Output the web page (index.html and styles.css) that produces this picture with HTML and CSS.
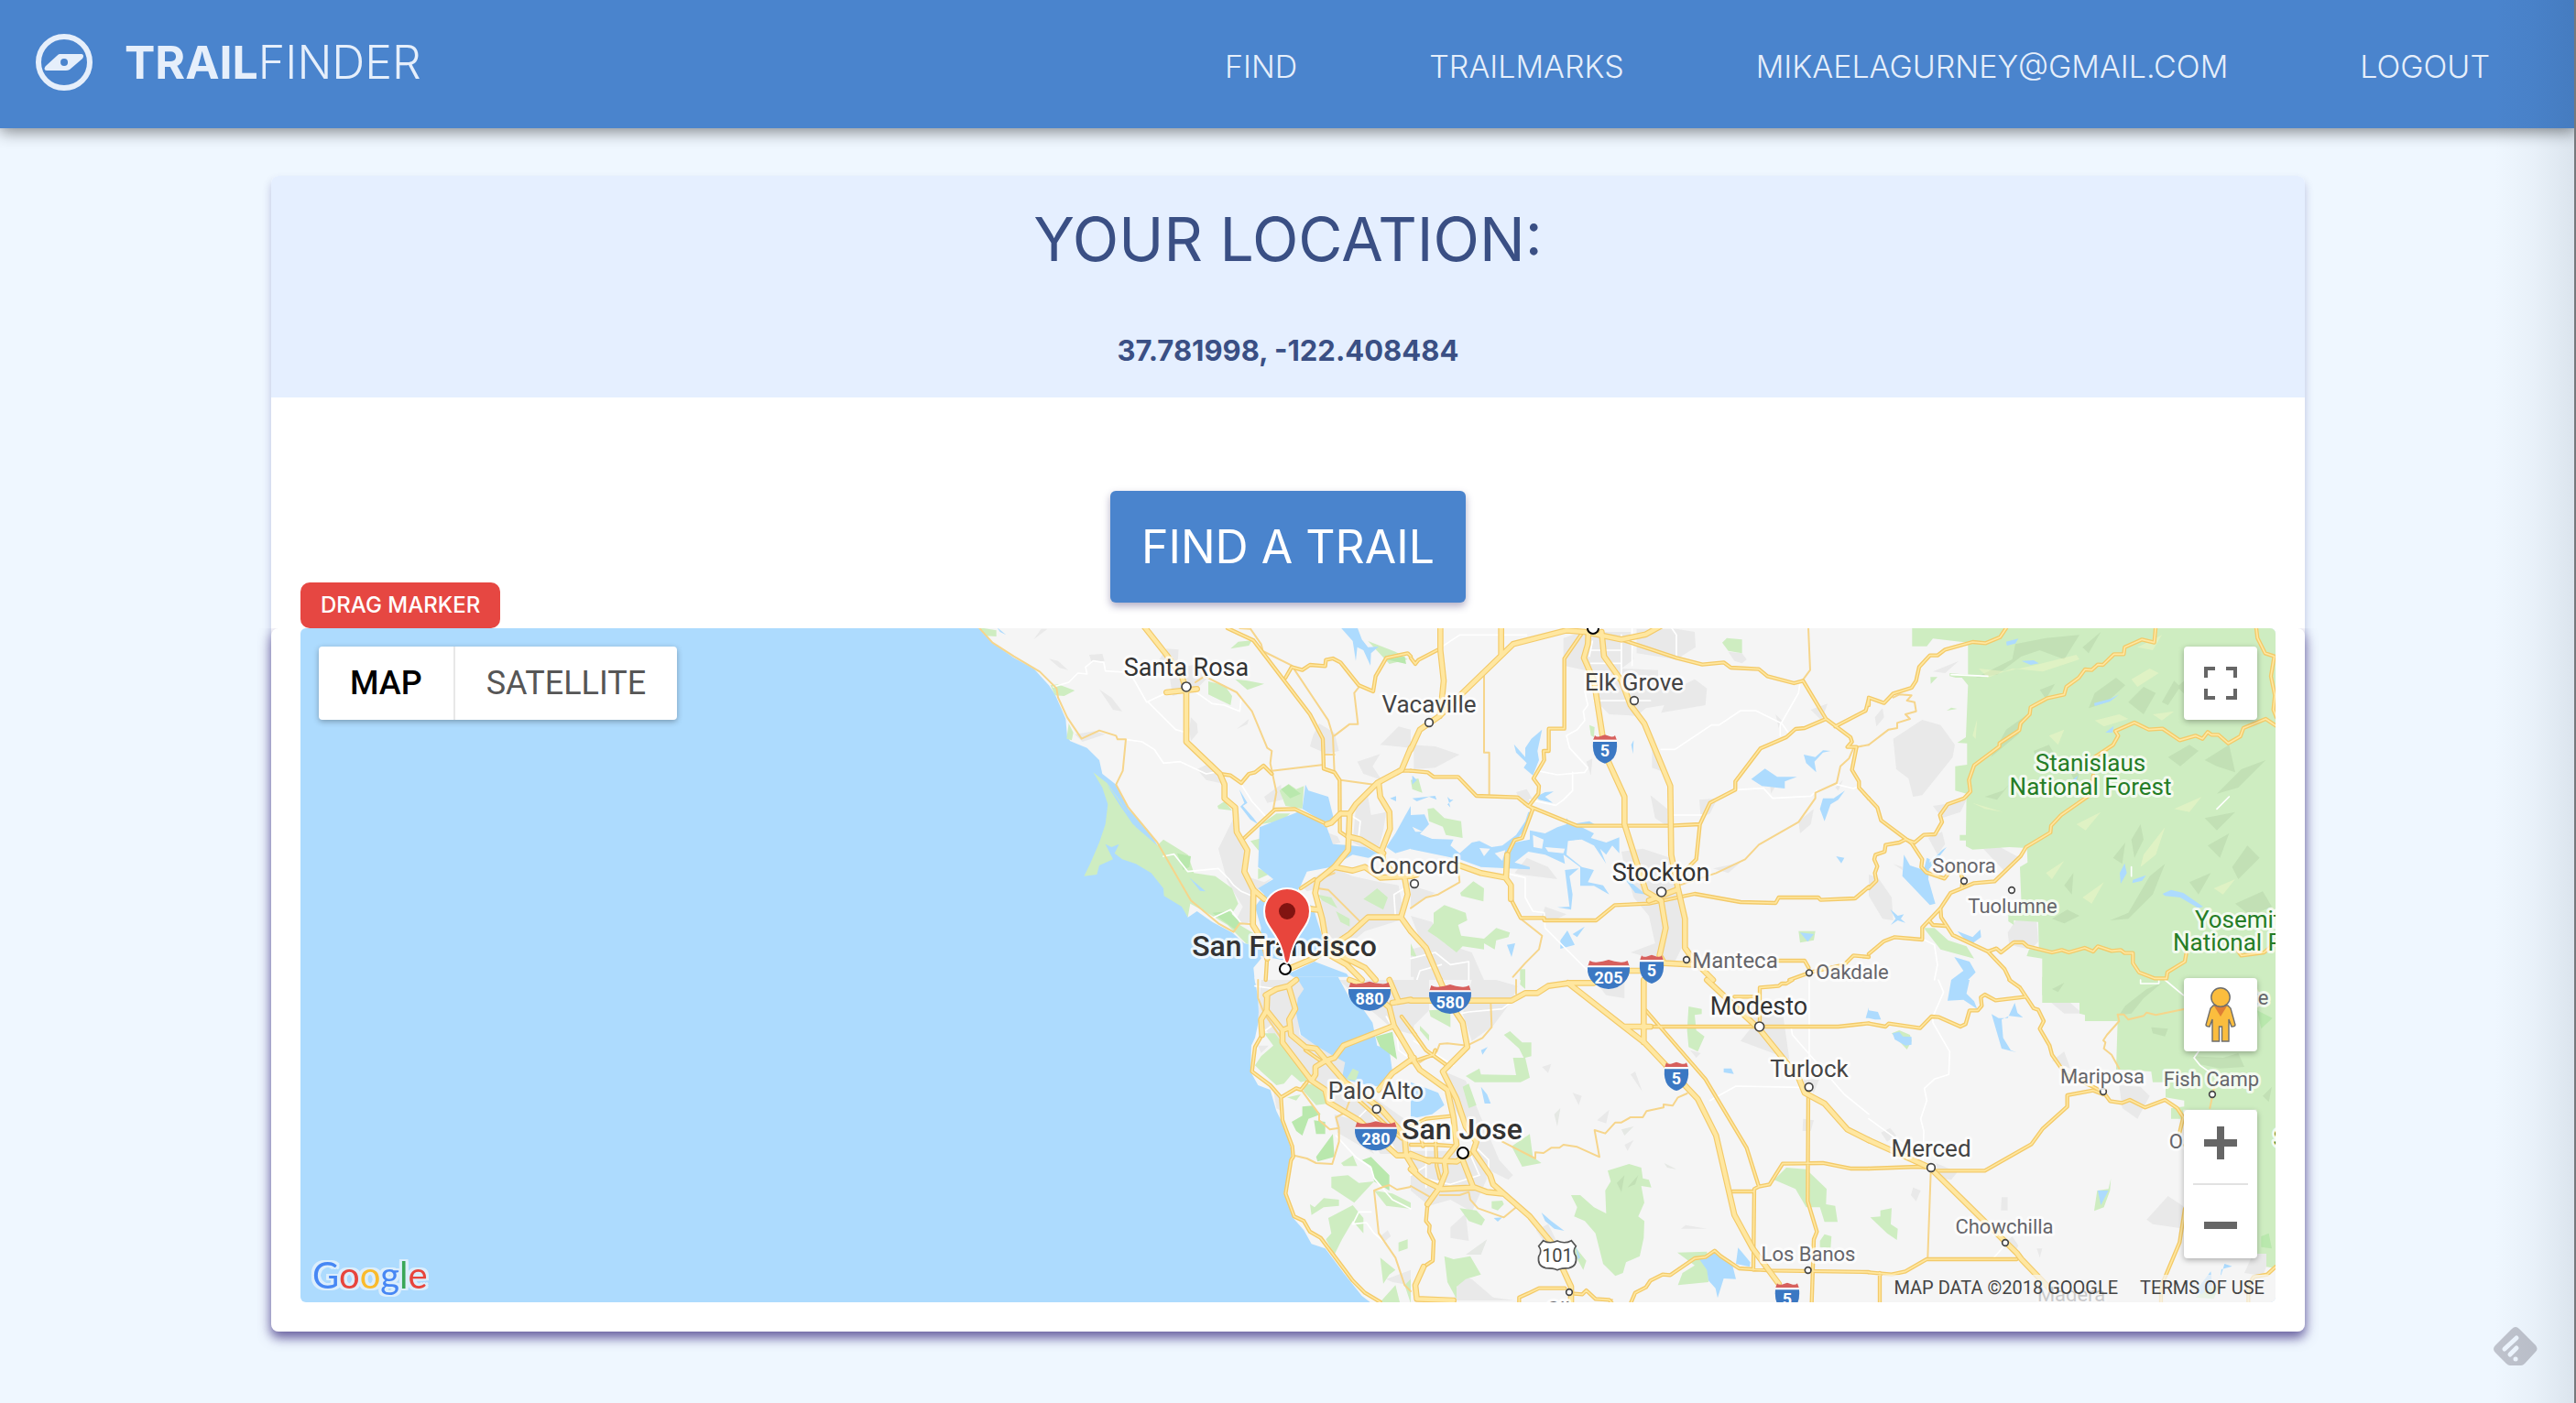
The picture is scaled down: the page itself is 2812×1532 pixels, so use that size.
FILE: index.html
```html
<!DOCTYPE html>
<html lang="en">
<head>
<meta charset="utf-8">
<meta name="viewport" content="width=device-width, initial-scale=1">
<title>TrailFinder</title>
<link rel="stylesheet" href="styles.css">
</head>
<body>
<header class="topbar">
  <a class="brand" href="#">
    <svg class="brand-icon" viewBox="0 0 64 64" aria-hidden="true">
      <circle cx="32" cy="32" r="28" fill="none" stroke="currentColor" stroke-width="6"/>
      <path fill="currentColor" fill-rule="evenodd" d="M27 23H50C53 23 54 25 52 28L38 40Q36 41 34 41H13C10 41 10 38 12 36L24 25Q26 23 27 23ZM32 28a4 4 0 1 0 .1 8a4 4 0 1 0-.1-8Z"/>
    </svg>
    <span class="brand-name"><b>TRAIL</b>FINDER</span>
  </a>
  <nav class="nav">
    <a href="#">FIND</a>
    <a href="#">TRAILMARKS</a>
    <a href="#">MIKAELAGURNEY@GMAIL.COM</a>
    <a href="#">LOGOUT</a>
  </nav>
</header>

<main class="card">
  <section class="location">
    <h1>YOUR LOCATION:</h1>
    <p>37.781998, -122.408484</p>
  </section>
  <section class="actions">
    <span class="drag-tag">DRAG MARKER</span>
    <button class="find" type="button">FIND A TRAIL</button>
  </section>
  <section class="map-card">
    <div class="map">
      <svg class="map-art" viewBox="0 0 2156 736" role="img" aria-label="Map of the San Francisco Bay Area">
        <defs>
          <g id="major">
            <g transform="translate(2136 -48)">
              <path d="M625 40L700 135L750 205L765 250V420L875 525L890 560V605L925 635L930 715L965 775L955 845L985 905L1020 935M985 905L983 1020L1020 1080L1030 1130M700 258L800 247"/>
              <path d="M1500 440L1470 512L1390 555L1320 625L1300 655H1270L1240 685L1225 690M1300 655L1295 775L1250 830L1195 875L1187 915L1210 1000L1220 1060L1240 1110"/>
              <path d="M1395 555L1400 600L1430 650L1432 705L1405 775L1410 810L1450 860M1295 730L1335 740L1410 785M1250 830L1310 842L1350 830L1400 865L1500 860M1480 865L1490 920L1468 995H1360L1300 1050L1180 1130L1110 1160M1468 995L1500 1040M1150 965L1195 970M1220 1110L1290 1150L1340 1200M1250 1110L1350 1160L1385 1200"/>
            </g>
            <g transform="translate(3636 -48)">
              <path d="M97 40V120L108 220L100 300L95 335M296 40V135M820 40L770 68L690 85L570 60L510 55L335 100L170 260L95 335L30 380L0 445"/>
              <path d="M582 60L580 100L567 145L600 220L628 400L645 480L700 600V690L770 910L820 940M625 60L633 140L690 220L720 300L765 360L850 565L853 790L875 900L898 1000V1095L930 1140L990 1200"/>
              <path d="M160 825L230 850L310 865L328 890V935M316 790L312 865M780 940L870 905M820 940L835 1030L815 1120L830 1145L925 1150M715 1170H760M0 860L20 855M0 1040L50 1095L95 1200"/>
            </g>
            <g transform="translate(2136 1152)">
              <path d="M1025 50L1060 30L1100 20L1125 0M1100 20L1122 95L1102 130L1108 180L1155 220L1190 225L1285 335L1400 420L1480 510M1030 50L1028 100L1010 130L1013 180M1028 100L1080 165L1105 155M1080 165V205L1175 330L1220 360L1230 400L1330 460L1455 575H1500M1175 330L1188 310V285L1220 265L1250 255L1280 215L1445 150M1395 360L1440 305L1510 255M1300 0L1350 20L1430 90L1445 150L1510 260M1440 75L1500 65M1430 0L1460 70M1480 510L1485 575L1515 625"/>
            </g>
            <g transform="translate(3636 1152)">
              <path d="M0 68H330L375 43H415L450 20L520 10H600M515 10L700 155L765 205L940 390L1000 510L1060 770L1120 880L1205 995M763 0V205M700 153H785M970 0L1145 165L1270 320L1290 370L1355 405L1430 490L1500 525"/>
              <path d="M95 0L130 80L170 140L185 220L105 300L150 390L180 480L215 530L205 560L260 640L270 670L390 775L460 860M0 250L30 295L120 360L140 450L150 540L110 590L115 630L95 680L55 735M0 575L50 590L150 595L190 570M0 620L40 655L100 685L210 680L250 695L300 700M170 590L205 680M0 570L60 595M495 940L525 1005V1070M42 940L15 1000L20 1045L140 1050"/>
            </g>
            <g transform="translate(5136 1152)"><path d="M0 525L200 615L485 895L500 915L610 1030"/></g>
          </g>
          <g id="medium">
            <g transform="translate(2136 -48)">
              <path d="M900 48L985 88L1170 330L1212 410L1215 508L1250 520L1267 545L1268 715L1290 730M1090 210L1110 175L1145 185L1170 168L1220 172L1222 152L1245 147L1270 160L1330 235L1377 255L1385 205L1420 145L1490 130L1500 140M955 735L1055 642L1120 640L1225 690M875 525L910 530L945 555L970 525L990 520L1018 498L1045 525M1140 900L1185 870M1030 1120L1025 1200M1465 515H1500M1250 1100L1280 1060"/>
            </g>
            <g transform="translate(3636 -48)">
              <path d="M0 145L15 165L25 152L90 118M0 515L55 520L75 535H155L215 597L350 602L385 630L545 695H850L947 690L980 620L1063 577V550L1145 442L1230 405L1260 378L1290 375L1360 345M560 65L503 148V377H452V450H435L437 480L402 540L420 565L418 590L387 630L400 640L365 735L340 742L316 790M328 935L360 997H437V1005H607L668 955L780 950L930 918L1080 945L1195 948L1205 930H1335L1342 938L1455 933L1500 895M947 690L935 805L880 860M690 85L870 145L955 167L1025 160L1048 177L1140 182L1168 205L1255 228L1285 220L1360 345L1440 405L1445 420L1430 437H1460L1445 512L1468 550V570L1500 605M1390 370L1490 318L1500 280M1200 1137H1290L1303 1160M1240 1200L1310 1175L1420 1150L1450 1120L1500 1125"/>
            </g>
            <g transform="translate(5136 -48)">
              <path d="M0 300V275L50 293L80 262L140 243L155 220L165 175L200 137H225L250 118L340 93L383 97L430 77L455 40M940 40L935 95L895 85L838 110L835 133H803L767 168L750 167L730 185L708 183L688 210L647 240L640 265L585 277L530 307L527 330L497 360L493 382L428 425V435L345 497L328 545L333 583L312 605L258 625L233 660L240 683L217 723L180 725L150 750L120 740L100 750L55 758L52 780L22 790L18 805L28 828L20 850L25 875L0 900"/>
              <path d="M0 605L28 635L40 677L140 752L175 805L172 830L188 848L248 868L265 845M290 825L308 870L305 895M735 530L730 590L630 660L597 695L595 717L515 765L497 795L412 877L345 883L305 900L268 915L235 965L175 1028V1068L85 1060L50 1073L0 1115M235 965L237 995L275 1053L390 1107L445 1165L462 1200M200 1008L210 1020L250 1023M390 1107L418 1097L433 1110L475 1077H505L520 1090L600 1110L632 1102L655 1110L707 1095L735 1107L750 1090L795 1105L825 1102L838 1112H865V1145L885 1175L935 1195H975L978 1175L1035 1140L1045 1085L1100 1080M740 470L800 430L817 400L807 385L870 357L917 380L962 377L1018 415L1070 400L1093 410L1110 388L1122 397H1145L1177 425L1217 402L1227 375L1300 345L1340 372M1268 40L1273 80L1298 130L1328 140L1317 205L1330 268L1325 315L1335 340M1190 1080L1220 1120L1295 1110L1340 1070"/>
            </g>
            <g transform="translate(2136 1152)">
              <path d="M1013 180L990 220L980 300L1040 345L1075 385L1125 355L1140 360L1160 335M1075 385L1080 460L1112 545L1115 580L1108 590L1090 700L1118 775L1150 790L1170 825L1205 845L1310 985L1350 1025L1400 1055M1155 230L1205 265M1330 395L1470 520M1470 120L1515 180"/>
            </g>
            <g transform="translate(3636 1152)">
              <path d="M1143 165V25L1205 20L1215 12H1230L1250 0M1060 55H1143M785 153H1400L1500 142M770 100L965 325L1100 550L1140 677L1125 685L1122 950M1053 693H1122M1140 677L1175 670L1218 602L1350 600L1440 618H1500M1302 370L1300 725L1330 825L1320 850L1313 1060M1500 957L1180 952L1075 945L1015 905L995 887L965 908L930 912L850 967L825 965L785 985L770 1007L735 1025L720 1060M55 735L50 790L62 805L60 825L75 855L72 920L42 940M355 1060V1040L385 1027L420 1010H505M535 1028L562 1030L575 1017L605 1045L650 1048L660 1060M0 160L50 230L125 285M0 270L75 245L80 230M0 540H80L150 545M0 480L50 455L140 445M80 500L85 610L95 650M30 500L40 545"/>
            </g>
            <g transform="translate(5136 1152)">
              <path d="M0 143L55 153L65 143L168 158L205 120L230 122L300 153L317 145L330 100H357L370 85L367 57L380 48L415 67L515 55L495 25L460 0M515 55L540 93L555 98L573 135L560 160L592 215L600 245L645 310L735 350L770 370L790 397L830 403L855 393L905 418L970 393L1010 420L1030 450L1018 500M768 375L735 362L650 378V415L570 487L533 538L380 625H210M200 615L160 612L0 618M485 915H190L120 955L75 965L0 958M36 960V1060M1035 750L1018 860L957 1005V1060M1332 940L1305 965L1260 973L1243 1000V1060"/>
            </g>
          </g>
        </defs>

        <g transform="scale(.33333)">
          <rect class="land" x="3630" width="2850" height="2210"/>
          <g transform="translate(2136 -48)">
            <path class="land" d="M88 40L130 95L200 145L265 180L315 235L335 265L355 310L370 345L375 405L385 418L440 440L480 480L490 525L535 560L575 640L640 710L690 790L770 995L800 975L850 1010L915 1045L955 1080L1000 1090L1010 1130L985 1160L990 1210H1510V40Z"/>
            <path class="urban" d="M315 148L345 155L378 185L350 178ZM447 135L490 132L497 155L455 160ZM480 248L520 275L555 320L525 315ZM265 85L290 50H310ZM400 395L465 385L500 395L425 420ZM700 115L740 118L735 180L800 165L840 150L835 210L800 245L720 270L710 205L650 190ZM780 340L800 360L803 390L780 418L775 380ZM930 378L970 345L965 362ZM800 510L850 485L885 530L900 560L830 545ZM870 770L920 670L940 720L965 780L960 860L1020 880L1050 865L1000 905L975 960L975 1010L915 1030L950 960L900 880ZM1180 400L1200 360L1250 390L1265 450L1225 460L1170 435ZM1325 485L1400 460L1375 500L1405 545L1345 525ZM1020 600L1075 560L1080 610L1030 620ZM1320 635L1360 600L1370 660L1420 650L1410 710L1390 790L1310 750ZM1400 430L1460 370L1500 380V440ZM1180 700L1260 730L1270 750L1240 758ZM1140 890L1240 830L1310 860L1400 880L1460 890L1480 1000L1350 1040L1280 1100L1220 1040L1200 900L1160 910Z"/>
            <path class="park" d="M460 520L490 570L508 625L500 690L480 750L450 820L430 860L472 855L480 825L525 805L500 755L520 765L545 755L530 785L555 805L600 820L650 850L690 900L692 925L750 960L770 995L778 950L850 990L900 1020L960 1080L985 1090L990 1050L940 1020L910 990L935 950L915 900L860 860L790 850L770 790L690 740L670 760L600 700L545 610L505 555ZM85 45L143 55V75L110 73ZM320 235L345 232L400 252L365 270L335 268ZM380 360L395 390L390 415L373 410ZM910 115L935 92L980 88L970 105ZM837 222L890 235L915 270L910 300L837 265ZM925 215L965 220L1020 230L965 250ZM1070 580L1100 558L1125 575L1150 565L1145 640L1090 630ZM867 630L890 615L915 645L870 640ZM1010 690L1060 655L1105 655L1080 678ZM975 745L1015 735L1005 780ZM1000 835L1040 852L1000 870ZM1360 90L1450 125L1490 150L1430 165ZM1345 935L1390 900L1425 930L1410 970ZM1195 920L1240 930L1260 965L1210 940ZM1255 975L1300 1000V1025L1270 1010Z"/>
            <path class="park-deep" d="M735 785L780 795L775 830L755 840ZM850 980L905 975L940 1010L925 1035ZM1420 150L1480 140L1485 165ZM1075 575L1100 560L1140 590L1105 605Z"/>
            <path class="water" d="M145 45L175 70L155 60ZM1270 45H1325L1340 85L1360 110L1395 108L1370 130L1368 170L1345 120L1325 110L1320 155L1310 90ZM938 575L965 620L950 630L985 670L1000 690L975 675L942 632L955 620ZM505 560L525 585L570 650L640 715L655 740L590 690L545 625ZM775 865L828 910L810 908ZM1155 560L1165 580L1230 600L1245 660L1250 680L1210 680L1145 640Z"/>
            <path class="water" d="M1005 700L1080 670L1130 650L1170 665L1225 700L1245 755L1290 758L1350 765L1400 790L1360 800L1310 790L1240 830L1160 845L1140 890L1120 920L1180 960L1195 1010L1215 1070L1190 1110L1160 1090L1140 1120L1080 1135L1000 1120L1010 1030L990 960L1020 920L1000 900L1050 870L1000 830ZM1500 630L1480 665L1450 720L1420 765L1450 785L1500 770ZM1432 605L1452 598V615ZM1185 1140L1290 1180L1310 1210H1140L1100 1180Z"/>
            <path class="white-road" d="M330 240L380 225L410 195L440 198L435 175L460 155L495 160L500 188L560 192L590 210L635 290L700 260M640 290L730 380L765 390M800 260L850 295L890 300L940 320L945 275M565 412L620 420L660 445L690 490L745 485L830 525L870 518M945 560L980 615L1025 665M690 795L725 788L770 845L870 835L905 870L920 890L945 910L980 925M855 995L910 970L945 1015M1310 665L1335 680L1330 725M1450 995L1445 920L1480 900"/>
            <path class="small-road" d="M85 45L130 95L200 140L285 190L340 245L345 275L375 340L422 410L480 383L535 400L540 412L567 412L557 515L535 560L575 635L670 750L780 940L870 1015L920 1043L940 1015L980 1018M795 225L825 205L930 258L980 320L1030 440L1045 450L1040 490L1060 585L1050 640M1010 120L1110 170L1230 350L1245 400L1250 520M1250 400L1300 362H1327L1315 260L1335 235M1045 515L1215 495M1215 462H1250M1270 545L1390 562M940 48L975 50L1010 100L1015 120M1195 900L1230 905L1335 1010M1200 870L1250 850"/>
          </g>
          <g transform="translate(3636 -48)">
            <path class="urban" d="M500 80L560 60H720L730 150L690 180L810 185V210L890 235L930 215L970 245L965 300L820 325L830 300L770 310L740 335L650 330L620 300L610 250L590 190L500 170ZM740 50H870L930 60L933 110L870 150L740 130ZM1040 125L1085 130L1100 150L1085 163L1060 155ZM0 430L80 435L160 462L80 505L10 510V445ZM345 585L380 575L400 610L370 630ZM575 485L595 475L590 530ZM790 440L820 470L830 520L790 505ZM785 595L840 640L845 700L800 670ZM945 610L1005 605L980 655L950 670ZM690 780L760 770L850 800L870 870L890 920L905 1060L860 1150L720 1110L800 1080L780 990L730 930L700 830ZM1195 330L1215 350L1205 375ZM1310 315L1365 295L1345 350ZM1270 680L1320 640L1310 690L1275 720ZM380 800L450 830L480 870L360 855L340 850ZM0 990L70 1010L110 1080L200 1110L240 1200H0V1100L40 1090ZM0 890L80 915L0 960ZM440 960L510 985L460 1010L430 990ZM990 835L1080 815L1040 850ZM1175 550L1205 545L1180 590ZM1390 570L1415 545L1400 580Z"/>
            <path class="park" d="M0 545L25 540L38 587L5 575ZM55 640L75 637L110 670L165 680L170 735L115 725L105 698L60 680ZM162 915L205 877L240 900L238 943L165 925ZM75 980L110 955L180 980L185 1005L155 1020L165 1055L240 1065V1100L170 1090L150 1110L85 1060L55 1040L75 1015ZM240 1065L280 1030L325 1045L320 1060L280 1070L275 1100L240 1080ZM1020 95L1035 80L1085 85V130L1040 122ZM585 365L602 372L600 405L590 400ZM358 1165H375V1200H358ZM1270 1040L1325 1040L1320 1070L1275 1078ZM0 1080L20 1125L0 1120Z"/>
            <path class="water" d="M338 428L375 470L375 440L395 410L425 385L430 380L415 450L420 480L400 530L370 505L380 490L345 455ZM0 660L45 658L60 690L30 722L70 738L140 740L130 760L160 785L200 750L225 745L265 765L300 760L345 725L375 680L385 650L395 650L380 700L340 750L390 740V710L440 720L480 700L510 690V670L525 690L585 680L602 690L560 700L600 720L590 735L640 750L683 733V785L660 760L640 790L620 770L640 820L600 760L560 740L515 745L510 790L560 830L600 840L580 880L630 890L650 920L600 892H555V830L500 790L505 820L440 790L385 780L340 815L390 830V838L320 835L230 830L160 805L0 772ZM505 840L550 835L520 860L530 920L525 970L480 962L520 960ZM690 855L770 920L735 915ZM5 530L20 545L5 560ZM5 605L80 597L85 610L60 600L20 615ZM120 600L130 610H140L120 625L130 635ZM410 600L440 585L468 583L440 600L465 620L420 610ZM490 1070L513 1038L537 1085L490 1098ZM530 1050L570 1025L545 1060ZM315 1085L342 1080L330 1125ZM722 430L730 415L728 460ZM1115 542L1160 508L1200 535H1265L1225 550L1225 573L1150 565ZM1287 462L1325 470L1350 448L1375 450L1350 455L1322 485L1328 520L1295 490ZM1340 640L1350 605L1385 605L1422 580L1400 610L1375 625L1355 680ZM1393 795L1420 800L1410 818ZM1275 1045L1320 1050L1300 1075Z"/>
            <path class="land" d="M400 725L435 740L430 770L402 765ZM440 765L505 770L500 785L450 780ZM530 745L555 740L585 780L560 790L530 770ZM5 698L40 715L15 715ZM225 768L260 770L240 795ZM275 785L310 775L300 810Z"/>
            <path class="white-road" d="M100 110L160 70H380M725 48V170M690 70V200M590 120H690M590 163H690M595 90L585 140M600 285H785M570 255L580 300L565 320L570 350L545 380L510 400L520 440L580 505L570 520L480 528L415 515M530 520V580L500 610L475 628L390 610M820 445H865L985 365H1010L1080 318H1130L1215 360L1240 395M1275 225L1270 260L1210 365V400M860 660H955M1065 577L1155 572L1185 605L1310 598L1330 580M1395 560L1450 573L1470 565M310 850L375 865V930L400 975L437 980L440 1030L580 1170M855 48L870 70V140M0 1130L80 1110L130 1150L190 1140V1200M20 1200L30 1170L100 1150"/>
            <path class="small-road" d="M240 205V455H257V595M1302 45L1308 185L1282 220M880 890L1000 850L1095 805L1140 757L1270 683L1325 605V587L1395 555L1407 500L1435 475L1450 440M1460 437L1500 430M155 830L160 880L90 920L50 930L0 965M360 1000L430 1055L420 1100L375 1145L335 1190"/>
          </g>
          <g transform="translate(5136 -48)">
            <path class="urban" d="M80 410L175 348L235 365L282 430L275 470L175 595L145 600L130 540L90 510ZM0 855L30 865L75 930L80 1005L45 1000L0 925ZM210 630L275 620L320 610L300 650L240 670ZM195 735L240 715L250 755L225 790ZM375 770L430 765L495 800L450 850ZM455 1045L485 1000L550 1010L555 1075L530 1100L460 1085ZM20 340L45 310L50 340L25 370ZM80 820L110 830V840ZM210 190L295 155L250 195Z"/>
            <path class="park" d="M142 40H1340V1250H568V1130L517 1122L525 1100L557 1095L555 1010L475 1005V1020L457 1008V980L500 955L495 830L520 815L518 768L460 765L340 773L318 762V743H298V725H318L320 590L283 580V500L322 495V425L290 423L318 405L325 235L305 210H285L265 205V195L325 200V95L210 82L190 107H142ZM202 208H225L203 230ZM255 318L270 308L290 312ZM180 1030H215L260 1070L320 1090L345 1130L235 1100Z"/>
            <path class="relief-dark" d="M480 100L580 80L690 70L640 150L560 120L500 140L420 200L350 210L470 150ZM700 110L760 60L720 130ZM740 260L810 210L840 235L780 290L720 310ZM850 290L900 240L940 260L900 330ZM450 380L520 330L490 395L400 470ZM540 450L590 430L620 480L560 500ZM380 600L440 580L460 560L420 610ZM660 520L700 480L680 560ZM1010 240L1090 170L1050 280ZM960 290L1000 220L1020 240L980 300ZM1100 480L1180 430L1200 520L1140 500ZM1140 590L1220 510L1300 480L1210 570ZM980 470L1050 430L1080 450L1020 500ZM860 740L890 690L900 740L870 800ZM800 800L840 750L830 820ZM920 860L970 820L930 920L850 1000L790 1005L850 980ZM1110 760L1180 720L1150 800ZM1190 830L1240 760L1280 800L1210 870ZM600 1000L650 970L690 990L640 1015ZM1050 880L1120 850L1080 920ZM1200 950L1290 910L1320 960L1250 990ZM1100 670L1200 650L1140 710ZM560 250L610 230L580 280ZM640 890L670 850L665 920Z"/>
            <path class="relief-light" d="M360 180L450 190L560 165L680 135L690 150L570 190L470 180L390 210ZM860 215L920 180L950 195L880 240ZM740 350L820 330L850 345L770 370ZM930 330L1000 320L960 350ZM590 400L640 380L620 430ZM340 620L440 650L380 640ZM1000 640L1090 600L1050 650ZM900 790L970 700L940 790L890 830ZM1130 900L1200 870L1160 920ZM580 850L640 810L600 870ZM680 690L760 650L710 710ZM880 110L960 70L930 120ZM700 930L770 880L730 950ZM340 400L355 345L350 410Z"/>
            <path class="water" d="M450 92L490 82L480 98L452 105ZM500 155L540 153L557 163L530 168ZM738 293L790 280L820 265L790 288L740 303ZM775 390L802 368L798 390ZM822 850L838 818L845 850L825 885ZM865 872L908 857L895 875L863 883ZM962 918L990 905L1030 915L1095 960L1080 965L1020 930L970 925ZM115 790L135 825L180 840L190 800L200 805L195 870L218 950L200 955L110 860ZM240 775L255 765L200 835L185 830ZM70 968L95 990L115 985L105 1000L120 1013L95 1005L72 1020L88 1000ZM290 1040L340 1060L365 1035L368 1060L340 1080L320 1075ZM280 1125L330 1140L350 1175L325 1200H270L310 1170ZM655 555L685 530L675 555Z"/>
            <path class="white-road" d="M175 1065L215 1085L225 1150L215 1200M1180 600L1140 640M270 200L390 205M860 830V860"/>
            <path class="small-road" d="M80 275L100 265L140 268L125 285L150 290L155 320L120 330L135 345L93 358V375L65 380L0 430"/>
          </g>
          <g transform="translate(2136 1152)">
            <path class="land" d="M988 -10L1000 60L1003 130L990 190L978 215L975 300L1000 345L1040 360L1060 430L1085 480L1110 560L1100 640L1085 700L1115 780L1150 820L1175 865L1220 880L1280 960L1340 1035L1385 1070H1510V-10Z"/>
            <path class="urban" d="M1010 0H1130L1155 30L1130 60L1135 180L1250 240L1290 270L1280 320L1400 400L1500 470V570H1400L1330 460L1240 410L1140 300L1030 170L1000 130ZM1250 440L1320 460L1380 570L1260 500ZM1265 0H1510V180L1440 160L1370 100ZM1000 215L1035 215L1010 240ZM1420 980L1500 950V1000L1440 990ZM1400 840L1425 820L1435 840L1410 860ZM1050 360L1075 380V430L1060 420Z"/>
            <path class="water" d="M1125 -10L1150 30L1130 60L1125 110L1140 180L1190 215L1240 245L1285 270L1275 320L1300 330L1360 345L1400 350L1440 300L1430 230L1390 215L1375 140L1340 90L1300 60L1262 -10Z"/>
            <path class="park" d="M1020 175L1055 175L1090 220L1150 300L1160 330L1140 335L1110 310L1085 340L1060 345L1010 300L990 280L1010 250L1050 215ZM1145 340L1200 345L1230 405L1190 410L1150 365ZM1095 385L1140 375L1125 395ZM1240 645L1295 640L1330 665L1380 660L1315 730L1240 680ZM1170 735L1185 745L1215 715L1265 720V740L1215 745L1175 770ZM1230 780L1310 738L1345 780L1345 830L1310 790L1275 850L1250 900L1222 850L1240 830ZM1272 600L1310 575L1325 610H1280ZM1380 690L1440 700L1500 730V750L1420 740ZM1460 860L1490 850V880L1460 890ZM1400 910L1450 950L1430 965L1410 995ZM1480 1000L1500 980V1060ZM1400 1055L1450 1000L1465 1060ZM1290 325L1310 290L1330 300L1320 330Z"/>
            <path class="park-deep" d="M1145 415L1180 412L1205 440L1165 455L1145 510L1125 495L1110 465L1145 445ZM1183 460L1220 465V505L1190 505ZM1245 505L1250 580L1195 595L1190 580L1215 545ZM1340 590L1370 580L1430 640V690L1380 660L1370 610ZM1385 185L1440 170L1455 260L1400 220Z"/>
            <path class="white-road" d="M990 20L1060 30M1045 150L1025 165M1255 510L1320 580L1370 615L1380 650L1440 720L1500 750M1310 800L1330 760L1370 760M1310 800L1355 795L1380 830L1415 860M1330 450L1360 420L1450 560M1420 120L1455 180L1460 230L1500 260"/>
            <path class="small-road" d="M1145 365L1200 440V460L1235 490L1265 485L1255 450L1285 435L1300 395M1265 490V530L1243 603L1190 600L1160 585L1118 575M1500 678L1455 687L1430 672L1410 678L1380 690L1385 735L1395 830L1450 910L1480 1000L1500 1020M1000 0V60L1020 110L1075 190"/>
          </g>
          <g transform="translate(3636 1152)">
            <path class="urban" d="M0 0H60V100L0 160ZM200 0H280L350 20L330 70L270 150L200 200L170 110ZM600 0L700 -20V60L640 50ZM110 300L180 330L230 450L290 590L335 640L320 655L250 620L200 520L130 400ZM0 560H230L250 650L200 760L130 720L60 740L0 690ZM130 810L180 765L190 855L130 845ZM410 820L450 800L480 860L430 850ZM1060 60L1220 120L1240 260L1160 230L1080 200L1120 150ZM1285 455L1320 460L1310 495H1283ZM1280 330L1340 320L1320 370ZM720 310L735 300L758 365ZM530 370L560 380L550 410ZM885 815L900 803L970 815ZM160 970L200 980L270 1040L340 1050H140ZM915 230L950 240L935 255ZM430 285L460 275L450 305ZM610 460L650 425L640 470ZM700 540L730 525L710 560Z"/>
            <path class="park" d="M305 180L325 168L365 205H395V250L375 255L390 320L360 335H210L180 315L225 290L230 310L345 312L335 255H370L355 225ZM170 350L190 340L215 410L190 420ZM645 625L715 603L755 615L760 650L780 655L788 680L755 675L765 730L745 775L765 790L763 845L750 905L705 925L695 960L670 970L630 930L605 830L570 790L535 775L545 745L525 705H555L600 745L640 765L637 690L655 660ZM330 545L390 505L400 580L428 600L365 612ZM160 748L215 755L243 785L232 805L190 790ZM265 725L300 723L305 735L285 755L265 748ZM110 905L140 915L195 905L230 965L180 980L150 1005V1045L120 990ZM910 87L953 95V112L930 115L935 165L962 185L940 235L910 220L905 165ZM1190 655L1230 615L1295 620L1362 685L1360 735L1390 740L1398 793H1355L1340 745L1295 745L1260 685ZM1340 855L1355 833L1378 840L1375 880L1340 875ZM873 893L970 890L975 990L875 1000L890 960L930 935ZM535 870L575 920L565 950L540 905ZM60 100L130 95V155L65 120ZM30 150L60 180V200L30 165ZM360 0H375V30L358 15Z"/>
            <path class="relief-dark" d="M675 665L700 640L690 695ZM710 680L745 640L735 670ZM690 490L730 480L700 510ZM830 600L870 620L840 615ZM180 900L250 850L230 900ZM470 440L490 420L480 480Z"/>
            <path class="water" d="M0 335L90 370L110 410L70 440L0 455ZM230 230L252 220L235 245ZM230 350L250 375L262 405L242 405ZM428 762L460 790L503 822L470 815L440 790ZM272 780L300 778L285 792ZM945 915L995 890L1050 920L1065 980L1025 978L1005 1042L998 1010L975 985L970 950ZM1072 877L1112 925L1110 940L1065 930ZM1025 290L1050 290L1058 308L1025 303ZM1500 90L1490 125H1500ZM540 870L555 910L548 915Z"/>
            <path class="white-road" d="M980 395L1065 348L1280 352M1305 0V270M1245 153L1250 180L1420 375L1500 440M10 200L140 280M190 560L225 640L130 670L40 650M200 535L255 590V640M165 110L190 105L300 95L345 60M0 640L50 610M50 480V680"/>
            <path class="small-road" d="M345 0V45M262 75L265 155L235 190L185 215L120 208L95 210L85 235L30 270M905 372L875 385L858 412L828 408V418L772 430L760 450H720L690 467H670L637 503L602 492L618 580L545 547L500 540L487 550H460L435 567L408 565V585L300 530M190 695L195 720L220 748L305 778L345 745M0 675L70 715M95 705H160L190 695M640 1048H660"/>
          </g>
          <g transform="translate(5136 1152)">
            <path class="urban" d="M40 500L70 485L90 510L60 530ZM145 680L170 690L155 725L138 705ZM435 712H455V755H433ZM550 880H568L560 910ZM910 785L980 708L1035 745V815L930 800ZM820 345L890 350L920 380L880 455L830 420ZM580 60L620 40L700 110L640 110ZM470 840L490 870L480 890L440 870ZM220 600L290 630L270 655L230 650ZM1230 960L1260 895H1302V940L1290 970ZM600 265L640 235L660 290Z"/>
            <path class="park" d="M568 -10H1340V945L1302 940V897H1270V425H1030V455H990V420L1033 415V395L972 385V335L930 335L925 300L810 293L815 135H708V115L690 110V75H568ZM75 175L100 165L135 180L140 200L125 228ZM5 778L38 775V755L75 748L72 800L95 815L92 852L60 830ZM738 757L748 690L785 685L793 650L790 690L770 745ZM1070 1040L1110 1010L1150 1000L1130 1045Z"/>
            <path class="relief-dark" d="M840 85L910 30L960 10L900 60L860 110L820 115ZM925 155L980 160L970 185L930 175ZM1060 250L1160 255L1210 240L1230 285L1150 290L1080 275ZM600 30L640 10L620 40ZM1290 380L1320 350L1310 400ZM1190 170L1230 210L1200 230Z"/>
            <path class="park-deep" d="M1272 100L1322 125L1285 160ZM1285 840L1310 830L1320 880L1285 875Z"/>
            <path class="water" d="M270 0H330L320 45L345 70L355 95L310 65L258 68ZM0 100L30 105L40 130L20 130L0 125ZM78 175L100 170L112 185L140 187V212L120 215L85 195ZM402 112L425 125H455L478 75L487 108L505 123L460 118L435 130L440 190L465 230L483 237L435 225ZM750 690L785 690L760 738ZM1070 1020L1120 955L1125 1000L1090 1030ZM1165 930L1190 938L1155 948L1150 980Z"/>
            <path class="white-road" d="M228 0L245 40L210 120V140L265 235L262 310L215 325L182 355L190 395L170 455L180 495L178 590M0 455L110 535M445 870L405 915M970 0L1030 50M1080 235L1065 255L1085 280L1120 305M890 0V12H950V0"/>
            <path class="small-road" d="M1035 95L940 115L910 107L900 118L850 130L835 113H815L820 135L780 180L768 198L775 205L770 225L795 245L820 290M203 630L193 910M1132 350L1117 420"/>
          </g>
          <use href="#medium" class="medium-case"/>
          <use href="#medium" class="medium-fill"/>
          <use href="#major" class="major-case"/>
          <use href="#major" class="major-fill"/>

          <defs>
            <g id="shield-wide">
              <path fill="#d7605d" d="M-62 0Q-52 6 -40 5Q-18 4 0 -3Q18 4 40 5Q52 6 62 0L68 18H-68Z"/>
              <path fill="#fff" d="M-68 16H68V24H-68Z"/>
              <path fill="#3b78c3" d="M-69 22H69Q71 50 52 70Q32 92 0 93Q-32 92 -52 70Q-71 50 -69 22Z"/>
            </g>
            <g id="shield">
              <path fill="#d7605d" d="M-33 4Q-28 10 -18 8L0 2L18 8Q28 10 33 4L39 20H-39Z"/>
              <path fill="#fff" d="M-39 18H39V26H-39Z"/>
              <path fill="#3b78c3" d="M-39 25H39Q42 60 28 78Q16 92 0 96Q-16 92 -28 78Q-42 60 -39 25Z"/>
            </g>
          </defs>
          <use href="#shield" x="4272" y="347"/>
          <use href="#shield-wide" x="4284" y="1089"/>
          <use href="#shield" x="4425" y="1068"/>
          <use href="#shield-wide" x="3501" y="1160"/>
          <use href="#shield-wide" x="3765" y="1170"/>
          <use href="#shield-wide" x="3522" y="1618"/>
          <use href="#shield" x="4506" y="1419"/>
          <use href="#shield" x="4869" y="2142"/>
          <path fill="#fff" stroke="#555" stroke-width="5" d="M4070 2006Q4092 2018 4116 2007Q4140 2018 4162 2006L4177 2024Q4164 2040 4177 2058Q4182 2090 4154 2096Q4130 2096 4116 2102Q4102 2096 4078 2096Q4050 2090 4055 2058Q4068 2040 4055 2024Z"/>
          <g class="town">
            <circle cx="2901" cy="192" r="15"/><circle cx="3696" cy="309" r="13"/><circle cx="3648" cy="837" r="13"/><circle cx="4368" cy="237" r="13"/><circle cx="4457" cy="864" r="15"/><circle cx="4539" cy="1086" r="10"/><circle cx="4941" cy="1129" r="10"/><circle cx="5448" cy="828" r="10"/><circle cx="5604" cy="858" r="10"/><circle cx="4778" cy="1305" r="15"/><circle cx="4940" cy="1503" r="13"/><circle cx="3524" cy="1575" r="13"/><circle cx="4937" cy="2103" r="10"/><circle cx="5340" cy="1767" r="13"/><circle cx="5583" cy="2013" r="10"/><circle cx="5904" cy="1518" r="10"/><circle cx="6261" cy="1527" r="10"/><circle cx="4155" cy="2175" r="10"/>
          </g>
          <g class="city"><circle cx="3225" cy="1116" r="18"/><circle cx="3807" cy="1719" r="18"/><circle cx="4233" cy="0" r="18"/></g>
        </g>

        <g class="label town-label large">
          <text x="967" y="52">Santa Rosa</text><text x="1485" y="276">Stockton</text><text x="1592" y="422">Modesto</text>
        </g>
        <g class="label town-label">
          <text x="1232" y="92">Vacaville</text><text x="1216" y="268">Concord</text><text x="1456" y="68">Elk Grove</text>
          <text x="1647" y="490">Turlock</text><text x="1174" y="514">Palo Alto</text><text x="1780" y="577">Merced</text>
        </g>
        <g class="label village-label large"><text x="1566" y="371">Manteca</text></g>
        <g class="label village-label">
          <text x="1694" y="383">Oakdale</text><text x="1816" y="267">Sonora</text>
          <text x="1869" y="311">Tuolumne</text><text x="1646" y="691">Los Banos</text><text x="1860" y="661">Chowchilla</text>
          <text x="1967" y="497">Mariposa</text><text x="2086" y="500">Fish Camp</text><text x="2139" y="411">te</text>
          <text x="2084" y="568">Oakhurst</text><text x="1388" y="751">Gilroy</text><text x="1933" y="735">Madera</text>
        </g>
        <g class="label park-label">
          <text x="1954" y="156">Stanislaus</text><text x="1954" y="182">National Forest</text>
          <text x="2122" y="327">Yosemite</text><text x="2122" y="352">National Park</text><text x="2187" y="566">Sierra</text>
        </g>
        <g class="label city-label"><text x="1074" y="358">San Francisco</text><text x="1268" y="558">San Jose</text></g>
        <g class="shield-label">
          <text x="1424" y="140">5</text><text x="1428" y="388">205</text><text x="1475" y="380">5</text><text x="1167" y="411">880</text>
          <text x="1255" y="415">580</text><text x="1174" y="564">280</text><text x="1502" y="498">5</text><text x="1623" y="739">5</text>
          <text class="us-route" x="1372" y="692">101</text>
        </g>
        <path fill="#e8453c" stroke="#fff" stroke-width="2" d="M1077 366C1073 366 1074 358 1071 350C1065 331 1052 325 1052 309A25 25 0 0 1 1102 309C1102 325 1089 331 1083 350C1080 358 1081 366 1077 366Z"/>
        <circle cx="1077" cy="309" r="9" fill="#811411"/>
      </svg>

      <div class="map-types">
        <button type="button" class="active">MAP</button>
        <button type="button">SATELLITE</button>
      </div>
      <button type="button" class="control fullscreen" aria-label="Toggle fullscreen">
        <svg viewBox="0 0 36 36" aria-hidden="true"><path fill="none" stroke="#666" stroke-width="4" d="M2 12V2H12M24 2H34V12M34 24V34H24M12 34H2V24"/></svg>
      </button>
      <div class="side-controls">
        <button type="button" class="control" aria-label="Street View">
          <svg class="pegman" viewBox="0 0 34 60" aria-hidden="true">
            <path fill="#fbbd3e" stroke="#6d6d6d" stroke-width="1.4" d="M9 20H25L28 23L33 41Q33 43 29 43L26 35V59H18.5V43H15.500V59H8V35L5 43Q1 43 1 41L6 23Z"/>
            <path fill="#de7e35" d="M10 20.500H24L17 32Z"/>
            <circle cx="17" cy="11" r="10.200" fill="#fbbd3e" stroke="#6d6d6d" stroke-width="1.400"/>
          </svg>
        </button>
        <div class="zoom">
          <button type="button" aria-label="Zoom in"><svg viewBox="0 0 36 36" aria-hidden="true"><path fill="#666" d="M14 0H22V14H36V22H22V36H14V22H0V14H14Z"/></svg></button>
          <button type="button" aria-label="Zoom out"><svg viewBox="0 0 36 36" aria-hidden="true"><path fill="#666" d="M0 14H36V22H0Z"/></svg></button>
        </div>
      </div>
      <a class="google" href="#" aria-label="Google"><span class="b">G</span><span class="r">o</span><span class="y">o</span><span class="b">g</span><span class="g">l</span><span class="r">e</span></a>
      <div class="credits"><span>MAP DATA ©2018 GOOGLE</span><a href="#">TERMS OF USE</a></div>
    </div>
  </section>
</main>

<a class="feed-badge" href="#" aria-label="Feed">
  <svg viewBox="0 0 48 42" aria-hidden="true">
    <path fill="#bfc3cd" d="M20 2Q24 -2 28 2L46 20Q49 24 46 27L34 40Q32 42 30 42H18Q16 42 14 40L2 28Q-2 24 2 20Z"/>
    <path stroke="#eef6ff" stroke-width="5" stroke-linecap="round" d="M12 24L25 12M18 30L25 23M24 35h.1"/>
  </svg>
</a>
</body>
</html>
```

FILE: styles.css
```css
* { box-sizing: border-box; }

body {
  display: flow-root;
  position: relative;
  min-height: 100vh;
  margin: 0;
  background: #eff7ff;
  font-family: Inter, "Liberation Sans", sans-serif;
}

/* soft shade along the window's right edge */
body::after {
  content: "";
  position: absolute;
  inset: 0 0 0 auto;
  width: 88px;
  border-right: 2px solid #77797c;
  background: linear-gradient(to right, rgba(20, 40, 60, 0), rgba(20, 40, 60, .03) 50%, rgba(20, 40, 60, .09));
  pointer-events: none;
}

a { color: inherit; text-decoration: none; }
button { font: inherit; border: 0; cursor: pointer; }

.topbar {
  display: flex;
  align-items: center;
  justify-content: space-between;
  height: 140px;
  padding: 0 94px 0 38px;
  background: #4a84cd;
  color: #e6effb;
  box-shadow: 0 4px 16px rgba(0, 0, 0, .45);
}

.brand { display: flex; align-items: center; gap: 34px; padding-bottom: 4px; }
.brand-icon { width: 64px; height: 64px; }
.brand-name { font-size: 50px; line-height: 60px; font-weight: 300; }
.brand-name b { font-weight: 700; }

.nav { display: flex; gap: 144px; padding-top: 6px; font-size: 34px; line-height: 40px; font-weight: 300; }

.card {
  margin: 52px 296px 78px;
  border-radius: 8px;
  background: #fff;
  box-shadow: 0 6px 10px rgba(70, 70, 150, .3);
}

.location {
  display: flex;
  flex-direction: column;
  align-items: center;
  gap: 60px;
  height: 242px;
  padding-top: 29px;
  border-radius: 8px 8px 0 0;
  background: #e5efff;
  color: #3a4f84;
}
.location h1 { margin: 0; font-size: 66px; line-height: 80px; font-weight: 400; }
.location p { margin: 0; font-size: 31px; line-height: 44px; font-weight: 700; }

.actions {
  display: grid;
  grid-template-columns: 1fr auto 1fr;
  padding: 102px 32px 0;
}
.drag-tag {
  align-self: end;
  justify-self: start;
  padding: 0 22px;
  border-radius: 10px;
  background: #e64742;
  color: #fff;
  font-size: 24px;
  line-height: 50px;
  font-weight: 500;
}
.find {
  height: 122px;
  margin-bottom: 28px;
  padding: 0 34px;
  border-radius: 6px;
  background: #4a84cd;
  color: #fff;
  font-size: 50px;
  box-shadow: 0 4px 8px rgba(60, 50, 110, .4);
}

.map-card {
  padding: 0 32px 32px;
  border-radius: 8px;
  background: #fff;
  box-shadow: 0 6px 14px rgba(75, 60, 135, .75);
  clip-path: inset(0 -30px -30px -30px);
}
.map {
  position: relative;
  overflow: hidden;
  border-radius: 6px;
  background: #addbfe;
  font-family: Roboto, "Liberation Sans", sans-serif;
}
.map-art { display: block; width: 100%; }

.land { fill: #f5f5f5; }
.urban { fill: #e9e9e9; }
.park { fill: #ceedc1; }
.park-deep { fill: #b9e8ad; }
.water { fill: #addbfe; }
.relief-dark { fill: rgba(90, 120, 80, .1); }
.relief-light { fill: rgba(250, 250, 200, .4); }
.white-road, .small-road, .medium-case, .medium-fill, .major-case, .major-fill {
  fill: none;
  stroke-linejoin: round;
  stroke-linecap: round;
}
.white-road { stroke: #fff; stroke-width: 5; }
.small-road { stroke: #f6d58b; stroke-width: 6; }
.medium-case { stroke: #f3ca69; stroke-width: 13; }
.medium-fill { stroke: #ffe7a0; stroke-width: 5; }
.major-case { stroke: #f3ca69; stroke-width: 20; }
.major-fill { stroke: #ffe7a0; stroke-width: 13; }
.town circle { fill: #fff; stroke: #444; stroke-width: 5; }
.city circle { fill: #fff; stroke: #000; stroke-width: 6; }

.label text {
  text-anchor: middle;
  stroke: rgba(255, 255, 255, .75);
  stroke-width: 6px;
  stroke-linejoin: round;
  paint-order: stroke;
}
.town-label { font-size: 26px; fill: #444; }
.town-label.large { font-size: 27px; fill: #333; }
.village-label { font-size: 22px; fill: #66666b; }
.village-label.large { font-size: 24px; }
.park-label { font-size: 26px; fill: #257d26; }
.city-label { font-size: 32px; font-weight: 500; fill: #333; }
.shield-label { font-size: 18px; font-weight: 700; fill: #fff; text-anchor: middle; }
.us-route { font-weight: 400; font-size: 20px; fill: #444; }

.map-types {
  position: absolute;
  top: 20px;
  left: 20px;
  display: flex;
  height: 80px;
  border-radius: 4px;
  background: #fff;
  box-shadow: 0 2px 6px rgba(0, 0, 0, .3);
}
.map-types button { padding: 0 34px; background: none; color: #565656; font-size: 36px; }
.map-types .active { border-right: 2px solid #e8e8e8; color: #000; font-weight: 500; }

.control, .zoom {
  width: 80px;
  border-radius: 4px;
  background: #fff;
  box-shadow: 0 2px 6px rgba(0, 0, 0, .3);
}
.control { display: grid; place-items: center; height: 80px; padding: 0; }
.control svg, .zoom svg { width: 36px; height: 36px; }
.control .pegman { width: 34px; height: 60px; }
.fullscreen { position: absolute; top: 20px; right: 20px; }
.side-controls {
  position: absolute;
  right: 20px;
  bottom: 48px;
  display: grid;
  gap: 64px;
}
.zoom { display: grid; padding: 0 10px; }
.zoom button { display: grid; place-items: center; height: 80px; padding: 0 0 8px; background: none; }
.zoom button + button { height: 82px; padding: 8px 0 0; border-top: 2px solid #e2e2e2; }

.google {
  position: absolute;
  left: 13px;
  bottom: 6px;
  font: 400 40px/48px Lato, sans-serif;
  filter: drop-shadow(3px 0 0 #dceefc) drop-shadow(-3px 0 0 #dceefc) drop-shadow(0 2px 0 #dceefc) drop-shadow(0 -2px 0 #dceefc);
}
.google .b { color: #4787f4; }
.google .r { color: #e8453c; }
.google .y { color: #fabb2c; }
.google .g { color: #3aa757; }

.credits {
  position: absolute;
  right: 0;
  bottom: 0;
  display: flex;
  gap: 24px;
  padding: 0 12px 2px;
  background: rgba(245, 245, 245, .7);
  color: #444;
  font-size: 20px;
  line-height: 28px;
}

.feed-badge { position: absolute; right: 42px; bottom: 41px; }
.feed-badge svg { display: block; width: 48px; height: 42px; }
```
